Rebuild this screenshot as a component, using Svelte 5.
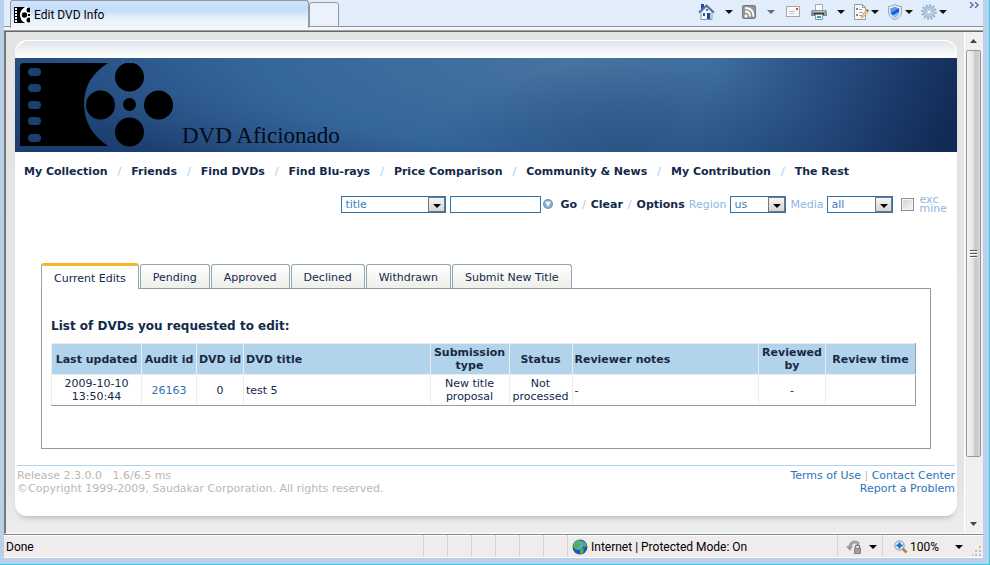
<script>
  const navItems = ['My Collection', 'Friends', 'Find DVDs', 'Find Blu-rays', 'Price Comparison', 'Community & News', 'My Contribution', 'The Rest'];
  const tabs = ['Current Edits', 'Pending', 'Approved', 'Declined', 'Withdrawn', 'Submit New Title'];
  let active = $state('Current Edits');
  let query = $state('');
  let exclude = $state(false);
</script>

{#snippet arrow()}
  <svg class="arrow" width="8" height="4" viewBox="0 0 8 4" aria-hidden="true"><path d="M0 0h8L4 4z" fill="currentColor" /></svg>
{/snippet}

{#snippet picker(id, label, value, options)}
  <span class="picker {id}">
    <select aria-label={label}>
      <option>{value}</option>
      {#each options as option}<option>{option}</option>{/each}
    </select>
    <span class="drop">{@render arrow()}</span>
  </span>
{/snippet}

<div class="window">
  <header class="toolbar">
    <div class="browser-tab">
      <svg width="16" height="16" viewBox="0 0 16 16" aria-hidden="true">
        <rect width="16" height="16" fill="#fff" />
        <path d="M0 0h11Q6 3 6 8t5 8H0z" />
        <path d="M1 1h2v2H1zM1 4h2v2H1zM1 7h2v2H1zM1 10h2v2H1zM1 13h2v2H1z" fill="#fff" />
        <circle cx="10.500" cy="8" r="2.700" /><circle cx="15" cy="3" r="2.500" /><circle cx="15" cy="13" r="2.500" />
        <path d="M14 7h2v2h-2z" />
      </svg>
      <span>Edit DVD Info</span>
    </div>
    <button class="new-tab" aria-label="New tab"></button>
    <div class="tools">
      <button class="split" aria-label="Home">
        <svg width="17" height="16" viewBox="0 0 17 16">
          <path d="M3 0h3v5H3z" fill="#2440d0" /><path d="M3 8l5.500-5L14 8v7.500H3z" fill="#f2f6fb" stroke="#8497b3" />
          <path d="M1 8.500L8.500 1.500 16 8.500" fill="none" stroke="#5c6f92" stroke-width="1.800" /><path d="M9 9h3v6H9z" fill="#164e9d" /><path d="M5 9h2v3H5z" fill="#3a5578" /><path d="M12 9h1v6h-1z" fill="#9cc4f0" />
          <path d="M8 5h2v2H8z" fill="#4b6fa8" />
        </svg>{@render arrow()}
      </button>
      <button class="split dim" aria-label="Feeds">
        <svg width="16" height="16" viewBox="0 0 16 16"><rect x="1.500" y="1.500" width="13" height="13" rx="1.500" fill="#969696" stroke="#777" /><circle cx="5" cy="12" r="1.500" fill="#fff" /><path d="M4 7.500q5 0 5 5M4 4q8.500 0 8.500 8.500" fill="none" stroke="#fff" stroke-width="1.800" /></svg>{@render arrow()}
      </button>
      <button class="mail" aria-label="Read mail">
        <svg width="16" height="16" viewBox="0 0 16 16"><rect x="1.500" y="2.500" width="13" height="10" fill="#f7f7f7" stroke="#a5a8af" /><path d="M11 4h2v2h-2z" fill="#c84c36" /><path d="M4 7.500h6M5 9.500h4" stroke="#c2c4ca" /></svg>
      </button>
      <button class="split" aria-label="Print">
        <svg width="16" height="16" viewBox="0 0 16 16"><path d="M4.500.500h7v7h-7z" fill="#fafcfd" stroke="#a2aab1" /><path d="M1 6h14l1 2v4H0V8z" fill="#858b8e" /><path d="M2 7h12v1H2z" fill="#bcc1c4" /><path d="M3 9h10v2H3z" fill="#303539" /><path d="M4.500 10.500h7v5h-7z" fill="#e8f7fc" stroke="#8d979d" /><path d="M6 12h4v2H6z" fill="#31a4bb" /><path d="M13 9h2v1h-2z" fill="#77d867" /></svg>{@render arrow()}
      </button>
      <button class="menu" aria-label="Page">
        <svg width="16" height="16" viewBox="0 0 16 16"><path d="M1.500.500h8l3 3v12h-11z" fill="#fafafa" stroke="#999" /><path d="M9.500.500v3h3" fill="none" stroke="#999" /><path d="M3 4h2v2H3zM3 10h2v2H3z" fill="#7b80a6" /><path d="M6 5.500h3M6 8.500h4M6 11.500h3" stroke="#9da4af" /><path d="M8.500 12l5-6 2 1.500-5 5.500-2.500 1z" fill="#f0cf8c" stroke="#b48a4c" stroke-width=".600" /><path d="M14 5l2 1.500-1 1.200-2-1.500z" fill="#c0504d" /></svg>{@render arrow()}
      </button>
      <button class="menu" aria-label="Safety">
        <svg width="16" height="16" viewBox="0 0 16 16"><path d="M8 .600Q11 2.500 14.300 2.500V8q0 5-6.300 7.500Q1.700 13 1.700 8V2.500Q5 2.500 8 .600z" fill="#fff" stroke="#8a9aac" /><path d="M8 2.500Q10 4 12.500 4v4q0 4-4.500 6Q3.500 12 3.500 8V4Q6 4 8 2.500z" fill="#8fbff2" /><path d="M8 2.500Q9 3.500 11 4L4 11Q3.500 9.500 3.500 8V4Q6 4 8 2.500z" fill="#5a9cf0" /><path d="M4 9l8-5v4l-6 3z" fill="#1f56e0" /></svg>{@render arrow()}
      </button>
      <button class="menu" aria-label="Tools">
        <svg width="16" height="16" viewBox="0 0 16 16"><circle cx="8" cy="8" r="6.800" fill="none" stroke="#8facc4" stroke-width="2" stroke-dasharray="1.800 1.760" /><circle cx="8" cy="8" r="4.700" fill="#e6f1fa" stroke="#a3bfd6" stroke-width="2.400" /><circle cx="8" cy="8" r="2.500" fill="#eef5fc" stroke="#8ba8c2" /></svg>{@render arrow()}
      </button>
    </div>
    <button class="more" aria-label="More commands"><svg width="10" height="6" viewBox="0 0 10 6"><path d="M1 0l3 3-3 3M6 0l3 3-3 3" fill="none" stroke="#58699f" stroke-width="1.400" /></svg></button>
  </header>

  <div class="viewport">
    <main>
      <div class="cap"></div>
      <div class="banner">
        <svg class="logo" width="155" height="84" viewBox="0 0 155 84" aria-hidden="true">
          <path d="M4 0H88Q64 15 64 41T88 83H0V4Q0 0 4 0z" />
          <g fill="#1d3f6e"><rect x="8" y="5" width="13" height="8" rx="4" /><rect x="8" y="21" width="13" height="8" rx="4" /><rect x="8" y="38" width="13" height="8" rx="4" /><rect x="8" y="54" width="13" height="8" rx="4" /><rect x="8" y="71" width="13" height="8" rx="4" /></g>
          <circle cx="109.500" cy="14" r="14.500" /><circle cx="80.500" cy="42" r="14.500" /><circle cx="138.500" cy="42" r="14.500" /><circle cx="109.500" cy="69" r="14.500" /><circle cx="109.500" cy="41.500" r="6.500" />
        </svg>
        <span class="brand">DVD Aficionado</span>
      </div>

      <nav>
        {#each navItems as item, i}
          {#if i}<i>/</i>{/if}<a href="#top">{item}</a>
        {/each}
      </nav>

      <form class="search" onsubmit={(e) => e.preventDefault()}>
        {@render picker('field', 'Search field', 'title', ['actor', 'director'])}
        <input class="query" type="text" aria-label="Search text" bind:value={query} />
        <svg class="hint" width="12" height="12" viewBox="0 0 12 12" aria-hidden="true"><circle cx="6" cy="6" r="5" fill="#7292ae" /><circle cx="6" cy="6" r="4" fill="#88a9c4" /><path d="M3.500 4h5L6 8.500z" fill="#fff" stroke="#d9ebf7" /></svg>
        <button>Go</button><i>/</i><button type="button" onclick={() => (query = '')}>Clear</button><i>/</i><button type="button">Options</button>
        <span class="word">Region</span>
        {@render picker('region', 'Region', 'us', ['uk'])}
        <span class="word">Media</span>
        {@render picker('media', 'Media', 'all', ['dvd', 'blu-ray'])}
        <label><input type="checkbox" bind:checked={exclude} /><span>exc<br />mine</span></label>
      </form>

      <section>
        <div class="tabs" role="tablist">
          {#each tabs as tab}
            <button role="tab" aria-selected={tab === active} class:active={tab === active} onclick={() => (active = tab)}>{tab}</button>
          {/each}
        </div>
        <div class="panel">
          <h1>List of DVDs you requested to edit:</h1>
          <table>
            <colgroup><col class="c90" /><col class="c55" /><col class="c47" /><col /><col class="c79" /><col class="c63" /><col /><col class="c67" /><col class="c90" /></colgroup>
            <thead>
              <tr><th>Last updated</th><th>Audit id</th><th>DVD id</th><th class="left">DVD title</th><th>Submission<br />type</th><th>Status</th><th class="left">Reviewer notes</th><th>Reviewed<br />by</th><th>Review time</th></tr>
            </thead>
            <tbody>
              <tr><td>2009-10-10<br />13:50:44</td><td><a href="#audit">26163</a></td><td>0</td><td class="left">test 5</td><td>New title<br />proposal</td><td>Not<br />processed</td><td class="left">-</td><td>-</td><td></td></tr>
            </tbody>
          </table>
        </div>
      </section>

      <footer>
        <div>Release 2.3.0.0 &nbsp; 1.6/6.5 ms<br />©Copyright 1999-2009, Saudakar Corporation. All rights reserved.</div>
        <div class="links"><a href="#terms">Terms of Use</a> | <a href="#contact">Contact Center</a><br /><a href="#report">Report a Problem</a></div>
      </footer>
    </main>
    <div class="scrollbar">
      <button aria-label="Scroll up"><svg width="7" height="4" viewBox="0 0 7 4"><path d="M0 4h7L3.500 0z" fill="#444" /></svg></button>
      <div class="thumb"><svg width="7" height="8" viewBox="0 0 7 8"><path d="M0 .500h7M0 3.500h7M0 6.500h7" stroke="#555" /><path d="M0 1.500h7M0 4.500h7M0 7.500h7" stroke="#fff" /></svg></div>
      <button aria-label="Scroll down"><svg width="7" height="4" viewBox="0 0 7 4"><path d="M0 0h7L3.500 4z" fill="#444" /></svg></button>
    </div>
  </div>

  <div class="status">
    <span class="done">Done</span>
    <span class="cell"></span><span class="cell"></span><span class="cell"></span><span class="cell"></span><span class="cell"></span><span class="cell"></span>
    <span class="zone">
      <svg width="16" height="16" viewBox="0 0 16 16" aria-hidden="true"><circle cx="8" cy="8" r="7.500" fill="#2456ad" /><circle cx="6.500" cy="6" r="5" fill="#5b9fe6" /><path d="M3 3q3-3 5-2l-1 3 2 2-3 2-2 3-3-3zM10 2q4 1 5 5l-3 1-2-3zM8 9l4 1-1 4-3 1z" fill="#4fb63e" /></svg>
      Internet | Protected Mode: On
    </span>
    <button class="privacy" aria-label="Privacy report">
      <svg width="16" height="16" viewBox="0 0 16 16"><path d="M4 8a5 5 0 0 1 9-3" fill="none" stroke="#a3a3a3" stroke-width="3" /><path d="M0 7h7l-3 5z" fill="#999" /><path d="M9.500 10V8q0-2 2-2t2 2v2" fill="none" stroke="#777" stroke-width="1.400" /><path d="M8 9h7v6H8z" fill="#858585" /><path d="M9 11h5M9 13h5" stroke="#bbb" /></svg>{@render arrow()}
    </button>
    <button class="zoom">
      <svg width="14" height="14" viewBox="0 0 14 14"><path d="M8 8l4.500 4.500" stroke="#b77a4b" stroke-width="2.500" /><circle cx="5.500" cy="5.500" r="4.700" fill="#d8ecfb" stroke="#7899b5" /><path d="M5.500 2.500v6M2.500 5.500h6" stroke="#1769bd" stroke-width="2" /></svg>
      <span>100%</span>{@render arrow()}
    </button>
    <svg class="grip" width="10" height="10" viewBox="0 0 10 10" aria-hidden="true"><path d="M7 0h2v2H7zM7 4h2v2H7zM7 8h2v2H7zM3 4h2v2H3zM3 8h2v2H3zM0 8h1v2H0z" fill="#c4c0c0" /></svg>
  </div>
</div>

<style>
  :global(body) { margin: 0; }
  .window, .window * { box-sizing: border-box; }
  .window {
    min-height: 100vh;
    display: flex;
    flex-direction: column;
    padding: 0 6px 6px 4px;
    background: #b9d0ea;
    border-right: 1px solid #37c6e6;
    border-bottom: 1px solid #37c6e6;
    font: 11px/13px Verdana, "DejaVu Sans", sans-serif;
    color: #12294b;
  }
  button { border: 0; padding: 0; background: none; font: inherit; color: inherit; }
  a { text-decoration: none; color: #2a74b8; }
  i { font-style: normal; color: #a9c9ea; }
  svg { display: block; flex: none; }

  .toolbar {
    height: 32px;
    display: flex;
    align-items: flex-start;
    padding-left: 6px;
    background: linear-gradient(#e1edfa 0 26px, #8c9299 26px 27px, #f3f7fc 27px 30px, #a0a0a0 30px 31px, #696969 31px);
  }
  .browser-tab {
    width: 299px;
    height: 28px;
    display: flex;
    align-items: center;
    gap: 4px;
    padding: 0 3px;
    border: 1px solid #9299a3;
    border-bottom: 0;
    border-radius: 3px 3px 0 0;
    background: linear-gradient(#cfe3fd, #c5ddfa 35%, #e4effc 60%, #f3f7fc);
    font: 12px/16px "Segoe UI", Roboto, sans-serif;
    color: #000;
  }
  .new-tab { width: 30px; height: 25px; margin-top: 2px; border: 1px solid #9299a3; border-radius: 3px 3px 0 0; background: #ebf2fb; }
  .tools { flex: 1; display: flex; justify-content: flex-end; gap: 8px; padding-top: 4px; color: #111; }
  .tools button { display: flex; align-items: center; }
  .split { gap: 10px; }
  .dim { color: #6c6c6c; }
  .mail { padding: 0 2px; }
  .menu { gap: 2px; }
  .more { margin: 2px 4px 0 22px; }

  .viewport {
    flex: 1;
    display: flex;
    border-left: 2px solid #777;
    border-bottom: 1px solid #fff;
    background: linear-gradient(#e4e4e4, #e5e5e5 90%, #ededed);
  }
  main { flex: 1; min-width: 0; margin: 8px 7px 17px 9px; border-radius: 12px; background: #fff; box-shadow: 0 5px 5px -3px #bbb; }
  .cap { height: 18px; border-radius: 14px 14px 0 0; border-top: 1px solid #fff; background: linear-gradient(#e0e5ea, #fff); }
  .banner {
    height: 94px;
    display: flex;
    align-items: flex-start;
    padding: 5px;
    background:
      linear-gradient(112deg, transparent 72%, #1d3d6ecc 87%, #122b56 98%),
      radial-gradient(ellipse 200px 100px at 65% 110%, #2a5383 0, transparent 100%),
      radial-gradient(ellipse 520px 150px at 59% 0, #47739f 0, #35669b 60%, transparent 100%),
      linear-gradient(5deg, #1b3c6c, #244b7f 40%, #2c5b8d);
  }
  .brand { align-self: flex-end; margin-left: 7px; font: 23px/22px "Palatino Linotype", Palatino, "Liberation Serif", serif; color: #020b18; }

  nav { display: flex; flex-wrap: wrap; gap: 0 10px; padding: 13px 9px 0; font-weight: bold; }
  nav a { color: #12294b; }
  nav i { font-weight: normal; }

  .search { display: flex; align-items: center; justify-content: flex-end; gap: 4px; padding: 17px 10px 0; }
  .search i { margin: 0 1px; }
  .search button { font-weight: bold; }
  .word { color: #8fb6df; }
  .picker { position: relative; height: 17px; }
  .picker select { display: block; width: 100%; height: 17px; padding: 0 3px; border: 1px solid #2f72b0; border-radius: 0; appearance: none; background: #fff; font: inherit; color: #3a7cc0; }
  .field { width: 105px; }
  .region { width: 56px; }
  .media { width: 66px; }
  .drop { position: absolute; top: 1px; right: 1px; width: 17px; height: 15px; display: flex; align-items: center; justify-content: center; padding-top: 3px; border: 1px solid #777; background: linear-gradient(#f5f5f5, #d5d5d5); color: #000; pointer-events: none; }
  .query { width: 91px; height: 17px; padding: 0 3px; border: 1px solid #2f72b0; font: inherit; }
  .hint { margin: 0 2px 0 -3px; }
  .search label { display: flex; align-items: center; gap: 5px; padding-left: 4px; line-height: 9px; color: #8fb6df; }
  .search label input { appearance: none; width: 13px; height: 13px; margin: 0; border: 1px solid #8e8f8f; outline: 1px solid #f4f4f4; outline-offset: -2px; background: linear-gradient(135deg, #cfd2d5, #f6f6f6); }
  .search label input:checked { background: #3a7cc0; }

  section { padding: 50px 26px 0; }
  .tabs { display: flex; align-items: flex-end; gap: 1px; }
  .tabs button { height: 24px; padding: 2px 12px 0; border: 1px solid #91a7b4; border-bottom: 0; border-radius: 3px 3px 0 0; background: linear-gradient(#fff, #eeefe9); }
  .tabs .active { height: 26px; margin-bottom: -1px; border-top: 3px solid #f9b32a; background: #fff; position: relative; }
  .panel { min-height: 161px; padding: 31px 14px 42px 9px; border: 1px solid #919b9c; }
  h1 { margin: 0 0 10px; font-size: 12px; line-height: 13px; }
  table { width: 100%; table-layout: fixed; border-collapse: collapse; border-right: 1px solid #9d9da1; }
  th, td { height: 31px; padding: 2px 0; border: 1px solid #ececec; text-align: center; }
  th { background: #b1d3ec; color: #182a42; }
  td { border-bottom-color: #9d9da1; }
  th:last-child, td:last-child { border-right-color: #9d9da1; }
  .left { padding-left: 2px; text-align: left; }
  .c90 { width: 90px; } .c55 { width: 55px; } .c47 { width: 47px; } .c79 { width: 79px; } .c63 { width: 63px; } .c67 { width: 67px; }

  footer { display: flex; justify-content: space-between; margin: 16px 2px 0; padding: 3px 0 18px; border-top: 1px solid #b1d3ec; color: #b8b8b8; }
  .links { text-align: right; }

  .scrollbar { width: 19px; display: flex; flex-direction: column; padding-right: 2px; border-left: 1px solid #fff; background: #f0f0f0; }
  .scrollbar button { height: 18px; display: flex; align-items: center; justify-content: center; }
  .thumb { flex: 1; display: flex; align-items: center; justify-content: center; margin: 0 0 58px 1px; border: 1px solid #979797; border-radius: 2px; background: linear-gradient(90deg, #f4f4f4, #e6e6e6 45%, #c8c8cc 65%, #d8d8dc); }

  .status { height: 24px; display: flex; border-top: 1px solid #7f8a87; border-bottom: 1px solid #fff; background: #f0ecec; box-shadow: inset 0 1px #fff; position: relative; font: 12px/16px "Segoe UI", Roboto, sans-serif; color: #000; }
  .status > span, .status > button { display: flex; align-items: center; padding-top: 2px; border-left: 1px solid #d6d2d2; }
  .status > .done { flex: 1; padding-left: 2px; border: 0; }
  .status > .cell { width: 24px; }
  .status > .zone { width: 270px; gap: 3px; padding-left: 4px; }
  .status > .privacy { width: 45px; gap: 7px; padding-left: 8px; }
  .status > .zoom { width: 101px; gap: 2px; padding-left: 11px; }
  .zoom .arrow { margin-left: 14px; }
  .grip { position: absolute; right: 1px; bottom: 1px; }
</style>
